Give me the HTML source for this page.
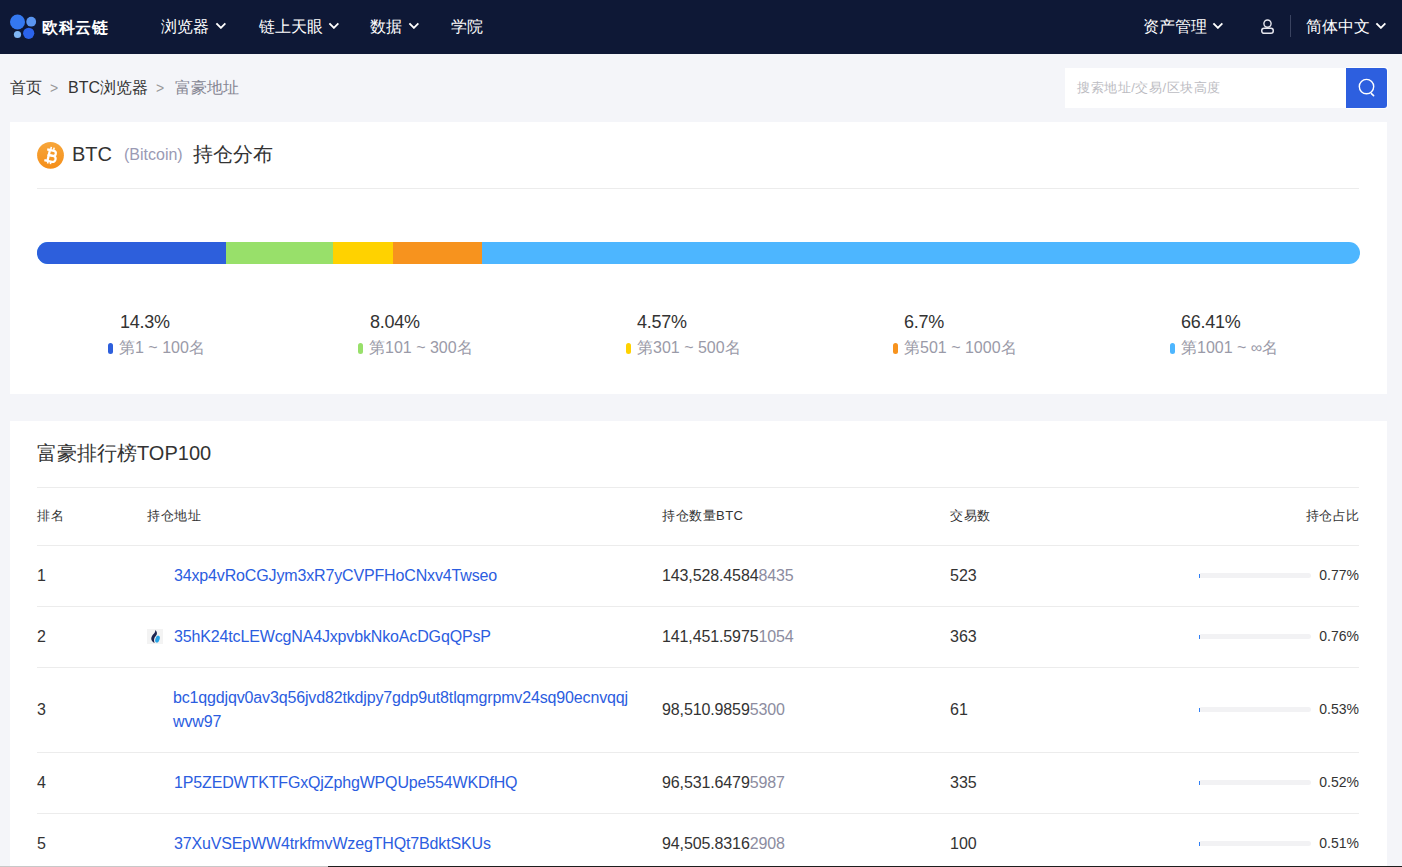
<!DOCTYPE html>
<html><head><meta charset="utf-8">
<style>
*{margin:0;padding:0;box-sizing:border-box}
html,body{width:1402px;height:867px;overflow:hidden}
body{background:#f4f5f9;font-family:"Liberation Sans",sans-serif;color:#333;position:relative}
.abs{position:absolute;white-space:nowrap}
.nav{position:absolute;left:0;top:0;width:1402px;height:54px;background:#0e1836}
.nav .t{position:absolute;top:17px;font-size:16px;line-height:20px;color:#fff}
.chev{position:absolute;width:11px;height:7px}
.card{position:absolute;background:#fff}
.leg-p{position:absolute;font-size:18px;letter-spacing:-0.25px;line-height:20px;color:#333}
.leg-l{position:absolute;font-size:16px;line-height:20px;color:#9a9aa8}
.mk{position:absolute;width:5px;height:11px;border-radius:2.5px}
.th{position:absolute;font-size:13px;letter-spacing:0.5px;line-height:16px;color:#333}
.hr{position:absolute;left:37px;width:1322px;height:1px;background:#ececec}
.td{position:absolute;font-size:16px;line-height:20px;color:#333}
.addr{position:absolute;font-size:16px;letter-spacing:-0.15px;line-height:24px;color:#2b5de0}
.lt{color:#8c8ca0}
.pbar{position:absolute;left:1199px;width:112px;height:5px;border-radius:2.5px;background:#f2f2f4}
.pbar i{position:absolute;left:0;top:0.5px;height:4px;width:1.2px;background:#2f7ff5}
.pct{position:absolute;right:43px;font-size:14px;line-height:18px;color:#333}
</style></head><body>
<div class="nav">
  <svg class="abs" style="left:0;top:0" width="40" height="54">
    <circle cx="17.5" cy="22" r="7.5" fill="#3478f0"/>
    <circle cx="31.2" cy="21.7" r="4.9" fill="#5a95f0"/>
    <circle cx="17.5" cy="34.5" r="3.6" fill="#7fb6f5"/>
    <circle cx="28.7" cy="33.3" r="5.6" fill="#2b63eb"/>
  </svg>
  <div class="t" style="left:42px;top:18px;font-weight:bold;font-size:16px;letter-spacing:0.6px">欧科云链</div>
  <div class="t" style="left:161px">浏览器</div>
  <svg class="chev" style="left:215px;top:22px" viewBox="0 0 11 7"><path d="M1.4 1.3L5.9 5.8L10.4 1.3" stroke="#fff" stroke-width="1.9" fill="none"/></svg>
  <div class="t" style="left:259px">链上天眼</div>
  <svg class="chev" style="left:328px;top:22px" viewBox="0 0 11 7"><path d="M1.4 1.3L5.9 5.8L10.4 1.3" stroke="#fff" stroke-width="1.9" fill="none"/></svg>
  <div class="t" style="left:370px">数据</div>
  <svg class="chev" style="left:408px;top:22px" viewBox="0 0 11 7"><path d="M1.4 1.3L5.9 5.8L10.4 1.3" stroke="#fff" stroke-width="1.9" fill="none"/></svg>
  <div class="t" style="left:451px">学院</div>
  <div class="t" style="left:1143px">资产管理</div>
  <svg class="chev" style="left:1212px;top:22px" viewBox="0 0 11 7"><path d="M1.4 1.3L5.9 5.8L10.4 1.3" stroke="#fff" stroke-width="1.9" fill="none"/></svg>
  <svg class="abs" style="left:1260px;top:17px" width="16" height="18" viewBox="0 0 16 18">
    <circle cx="7.5" cy="6.6" r="3.6" stroke="#e6e6ee" stroke-width="1.4" fill="none"/>
    <rect x="1.75" y="11.3" width="11.5" height="5" rx="2.3" stroke="#e6e6ee" stroke-width="1.5" fill="none"/>
  </svg>
  <div class="abs" style="left:1290px;top:15px;width:1px;height:22px;background:#3a4360"></div>
  <div class="t" style="left:1306px">简体中文</div>
  <svg class="chev" style="left:1375px;top:22px" viewBox="0 0 11 7"><path d="M1.4 1.3L5.9 5.8L10.4 1.3" stroke="#fff" stroke-width="1.9" fill="none"/></svg>
</div>

<!-- breadcrumb -->
<div class="abs" style="left:10px;top:78px;font-size:16px;line-height:20px;color:#333">首页</div>
<div class="abs" style="left:50px;top:78px;font-size:14px;line-height:20px;color:#999">&gt;</div>
<div class="abs" style="left:68px;top:78px;font-size:16px;line-height:20px;color:#333">BTC浏览器</div>
<div class="abs" style="left:156px;top:78px;font-size:14px;line-height:20px;color:#999">&gt;</div>
<div class="abs" style="left:175px;top:78px;font-size:16px;line-height:20px;color:#858592">富豪地址</div>

<!-- search -->
<div class="abs" style="left:1065px;top:68px;width:281px;height:40px;background:#fff"></div>
<div class="abs" style="left:1345px;top:67px;width:43px;height:42px;background:#fff;border-radius:3px;opacity:.8"></div>
<div class="abs" style="left:1077px;top:78px;font-size:13px;letter-spacing:0.55px;line-height:20px;color:#bcbcc2">搜索地址/交易/区块高度</div>
<div class="abs" style="left:1346px;top:68px;width:41px;height:40px;background:#2d5fdf;border-radius:0 3px 3px 0"></div>
<svg class="abs" style="left:1356px;top:77px" width="20" height="20" viewBox="0 0 20 20"><circle cx="10.5" cy="9.6" r="7.2" stroke="#fff" stroke-width="1.4" fill="none"/><path d="M15.4 16.6L17.6 18.6" stroke="#fff" stroke-width="1.6" stroke-linecap="round"/></svg>

<!-- card 1 -->
<div class="card" style="left:10px;top:122px;width:1377px;height:272px"></div>
<svg class="abs" style="left:36px;top:141px" width="29" height="29" viewBox="0 0 29 29">
  <defs><linearGradient id="bg" x1="0" y1="0" x2="0" y2="1"><stop offset="0" stop-color="#f7a63a"/><stop offset="1" stop-color="#f58f1a"/></linearGradient></defs>
  <circle cx="14.5" cy="14.3" r="13.4" fill="url(#bg)"/>
  <g transform="translate(1.1 0.2) rotate(13 14.5 14.5)" fill="none" stroke="#fff">
    <path d="M11.6 8.2V20.8" stroke-width="2.3"/>
    <path d="M8.8 9.3H15.6A2.55 2.55 0 0 1 15.6 14.4H10.5" stroke-width="2.2"/>
    <path d="M10.5 14.4H16.2A3 3 0 0 1 16.2 20.4H8.4" stroke-width="2.2"/>
    <path d="M12.3 6V8.4M15.2 6V8.4M12.3 20.5V23M15.2 20.5V23" stroke-width="1.6"/>
  </g>
</svg>
<div class="abs" style="left:72px;top:142px;font-size:20px;line-height:24px;color:#333">BTC</div>
<div class="abs" style="left:124px;top:145px;font-size:16px;line-height:20px;color:#9a9ab4">(Bitcoin)</div>
<div class="abs" style="left:193px;top:142px;font-size:20px;line-height:24px;color:#333">持仓分布</div>
<div class="hr" style="top:188px"></div>
<div class="abs" style="left:37px;top:242px;width:1323px;height:22px;border-radius:11px;overflow:hidden;background:#4db6ff">
  <div class="abs" style="left:0;top:0;width:189px;height:22px;background:#2d5fdc"></div>
  <div class="abs" style="left:189px;top:0;width:107px;height:22px;background:#98e06a"></div>
  <div class="abs" style="left:296px;top:0;width:60px;height:22px;background:#ffd200"></div>
  <div class="abs" style="left:356px;top:0;width:89px;height:22px;background:#f7931e"></div>
</div>
<div class="leg-p" style="left:120px;top:312px">14.3%</div>
<div class="mk" style="left:108px;top:343px;background:#2d5fdc"></div>
<div class="leg-l" style="left:119px;top:338px">第1 ~ 100名</div>
<div class="leg-p" style="left:370px;top:312px">8.04%</div>
<div class="mk" style="left:358px;top:343px;background:#98e06a"></div>
<div class="leg-l" style="left:369px;top:338px">第101 ~ 300名</div>
<div class="leg-p" style="left:637px;top:312px">4.57%</div>
<div class="mk" style="left:626px;top:343px;background:#ffd200"></div>
<div class="leg-l" style="left:637px;top:338px">第301 ~ 500名</div>
<div class="leg-p" style="left:904px;top:312px">6.7%</div>
<div class="mk" style="left:893px;top:343px;background:#f7931e"></div>
<div class="leg-l" style="left:904px;top:338px">第501 ~ 1000名</div>
<div class="leg-p" style="left:1181px;top:312px">66.41%</div>
<div class="mk" style="left:1170px;top:343px;background:#4db6ff"></div>
<div class="leg-l" style="left:1181px;top:338px">第1001 ~ ∞名</div>

<!-- card 2 -->
<div class="card" style="left:10px;top:421px;width:1377px;height:446px"></div>
<div class="abs" style="left:37px;top:441px;font-size:20px;line-height:24px;color:#333">富豪排行榜TOP100</div>
<div class="hr" style="top:487px"></div>
<div class="th" style="left:37px;top:508px">排名</div>
<div class="th" style="left:147px;top:508px">持仓地址</div>
<div class="th" style="left:662px;top:508px">持仓数量BTC</div>
<div class="th" style="left:950px;top:508px">交易数</div>
<div class="th" style="right:43px;top:508px;letter-spacing:0.5px;margin-right:-0.5px">持仓占比</div>
<div class="hr" style="top:545px"></div>

<div class="td" style="left:37px;top:566px">1</div>
<div class="addr" style="left:174px;top:564px">34xp4vRoCGJym3xR7yCVPFHoCNxv4Twseo</div>
<div class="td" style="left:662px;top:566px;letter-spacing:-0.12px">143,528.4584<span class="lt">8435</span></div>
<div class="td" style="left:950px;top:566px">523</div>
<div class="pbar" style="top:573px"><i></i></div>
<div class="pct" style="top:566px">0.77%</div>
<div class="hr" style="top:606px"></div>

<div class="td" style="left:37px;top:627px">2</div>
<svg class="abs" style="left:147px;top:629px" width="16" height="15" viewBox="0 0 16 15"><rect width="16" height="15" fill="#f3f3f3"/><path d="M8.3 1.1C10.4 2.8 10.6 5.3 8.6 7.3C7.1 8.9 6.5 11.3 7.6 13.9C5 12.8 3.4 10.3 4.8 7.5C6.1 5.1 8.5 4.1 8.3 1.1Z" fill="#1b2450"/><ellipse cx="10.5" cy="10.1" rx="2.1" ry="3.6" transform="rotate(18 10.5 10.1)" fill="#26a3e6"/></svg>
<div class="addr" style="left:174px;top:625px">35hK24tcLEWcgNA4JxpvbkNkoAcDGqQPsP</div>
<div class="td" style="left:662px;top:627px;letter-spacing:-0.12px">141,451.5975<span class="lt">1054</span></div>
<div class="td" style="left:950px;top:627px">363</div>
<div class="pbar" style="top:634px"><i></i></div>
<div class="pct" style="top:627px">0.76%</div>
<div class="hr" style="top:667px"></div>

<div class="td" style="left:37px;top:700px">3</div>
<div class="addr" style="left:173px;top:686px;white-space:normal;width:460px;word-break:break-all">bc1qgdjqv0av3q56jvd82tkdjpy7gdp9ut8tlqmgrpmv24sq90ecnvqqj<br>wvw97</div>
<div class="td" style="left:662px;top:700px;letter-spacing:-0.12px">98,510.9859<span class="lt">5300</span></div>
<div class="td" style="left:950px;top:700px">61</div>
<div class="pbar" style="top:707px"><i></i></div>
<div class="pct" style="top:700px">0.53%</div>
<div class="hr" style="top:752px"></div>

<div class="td" style="left:37px;top:773px">4</div>
<div class="addr" style="left:174px;top:771px">1P5ZEDWTKTFGxQjZphgWPQUpe554WKDfHQ</div>
<div class="td" style="left:662px;top:773px;letter-spacing:-0.12px">96,531.6479<span class="lt">5987</span></div>
<div class="td" style="left:950px;top:773px">335</div>
<div class="pbar" style="top:780px"><i></i></div>
<div class="pct" style="top:773px">0.52%</div>
<div class="hr" style="top:813px"></div>

<div class="td" style="left:37px;top:834px">5</div>
<div class="addr" style="left:174px;top:832px">37XuVSEpWW4trkfmvWzegTHQt7BdktSKUs</div>
<div class="td" style="left:662px;top:834px;letter-spacing:-0.12px">94,505.8316<span class="lt">2908</span></div>
<div class="td" style="left:950px;top:834px">100</div>
<div class="pbar" style="top:841px"><i></i></div>
<div class="pct" style="top:834px">0.51%</div>
<div class="abs" style="left:0;top:866px;width:328px;height:1px;background:#c8c8c8"></div>
<div class="abs" style="left:328px;top:866px;width:1074px;height:1px;background:#1e1e1e"></div>
</body></html>
